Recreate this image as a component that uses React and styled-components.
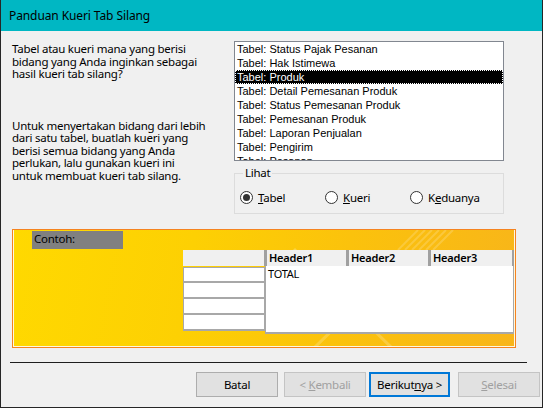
import React from "react";
import styled, {createGlobalStyle} from "styled-components";

const GlobalStyle = createGlobalStyle`
  body {
    margin: 0;
    background: #f0f0f0;
  }
`;

const UI_FONT = `"Noto Sans", "Open Sans", sans-serif`;
const LIST_FONT = `"Liberation Sans", Arial, sans-serif`;

const Window = styled.div`
  width: 543px;
  height: 408px;
  box-sizing: border-box;
  border: 1px solid #262626;
  border-top: none;
  background: #f0f0f0;
  font-family: ${UI_FONT};
  font-size: 11.5px;
  letter-spacing: -0.25px;
  color: #000;
  display: flex;
  flex-direction: column;
  overflow: hidden;
`;

const TitleBar = styled.div`
  height: 31px;
  flex: none;
  background: #00b7c3;
  display: flex;
  align-items: center;
  padding-left: 8px;
  font-size: 12px;
  letter-spacing: -0.1px;
`;

const Body = styled.div`
  padding: 10px 0 0 11px;
`;

const TopRow = styled.div`
  display: flex;
`;

const Intro = styled.div`
  width: 222px;
  padding-top: 2px;
`;

const Para = styled.p`
  margin: 0 0 ${p => p.$gap || 0}px;
  line-height: 12.5px;
`;

const RightCol = styled.div`
  width: 270px;
  display: flex;
  flex-direction: column;
`;

const ListBox = styled.div`
  height: 120px;
  box-sizing: border-box;
  border: 1px solid #828790;
  background: #fff;
  overflow: hidden;
  font-family: ${LIST_FONT};
  font-size: 11px;
  letter-spacing: 0;
`;

const ListItem = styled.div`
  height: 14px;
  line-height: 14px;
  padding-left: 2px;
  white-space: nowrap;
  background: ${p => (p.$selected ? "#000" : "transparent")};
  color: ${p => (p.$selected ? "#fff" : "#000")};
  outline: ${p => (p.$selected ? "1px dotted #fff" : "none")};
  outline-offset: -1px;
`;

const GroupBox = styled.fieldset`
  margin: 6px 0 0;
  height: 47px;
  box-sizing: border-box;
  border: 1px solid #dcdcdc;
  padding: 11px 0 0 5px;
  min-width: 0;
`;

const Legend = styled.legend`
  padding: 0 2px;
  margin-left: 3px;
  line-height: 12.5px;
`;

const RadioRow = styled.div`
  display: flex;
`;

const RadioOption = styled.label`
  width: 85px;
  display: flex;
  align-items: center;
  gap: 5px;
  line-height: 14px;
`;

const RadioCircle = styled.span`
  width: 13px;
  height: 13px;
  box-sizing: border-box;
  border-radius: 50%;
  border: 1px solid #333;
  background: #fff;
  display: flex;
  align-items: center;
  justify-content: center;
  &::after {
    content: "";
    width: 7px;
    height: 7px;
    border-radius: 50%;
    background: ${p => (p.$checked ? "#333" : "transparent")};
  }
`;

const SamplePanel = styled.div`
  position: relative;
  margin-top: 15px;
  width: 504px;
  height: 119px;
  box-sizing: border-box;
  border: 1px solid #f5831f;
  box-shadow: inset 1px -1px 0 #fff8e0, inset -1px 0 0 #fff8e0;
  background: linear-gradient(100deg, #ffd900 0%, #fdd003 35%, #fbc20c 65%, #f8b51a 100%);
  padding-top: 1px;
  overflow: hidden;
`;

const Decor = styled.svg`
  position: absolute;
  inset: 0;
  pointer-events: none;
`;

const SampleLabel = styled.div`
  position: relative;
  margin-left: 19px;
  width: 91px;
  height: 18px;
  background: #808080;
  padding-left: 2px;
  box-sizing: border-box;
  line-height: 15px;
`;

const Table = styled.div`
  position: relative;
  margin: 1px 0 0 170px;
  width: 331px;
`;

const HeaderRow = styled.div`
  display: flex;
  height: 16px;
`;

const HeaderCell = styled.div`
  width: ${p => p.$w}px;
  box-sizing: border-box;
  background: #f0f0f0;
  border-right: 2px solid #a0a0a0;
  border-left: ${p => (p.$first ? "none" : "1px solid #a0a0a0")};
  padding-left: 2px;
  font-weight: 600;
  font-size: 11px;
  letter-spacing: -0.2px;
  line-height: 16px;
`;

const BodyRow = styled.div`
  display: flex;
`;

const RowHeads = styled.div`
  width: 82px;
  display: flex;
  flex-direction: column;
  margin-top: 1px;
`;

const RowHead = styled.div`
  height: 16px;
  box-sizing: border-box;
  background: #fff;
  border: 1px solid #a8a8a8;
  border-top: ${p => (p.$first ? "1px solid #a8a8a8" : "none")};
  border-bottom-width: 2px;
`;

const DataArea = styled.div`
  width: 249px;
  height: 68px;
  box-sizing: border-box;
  background: #fff;
  border: 1px solid #a8a8a8;
  border-top: none;
  border-bottom-width: 2px;
  padding-left: 2px;
  font-size: 11px;
  line-height: 15px;
`;

const Footer = styled.div`
  margin-top: 14px;
`;

const Separator = styled.div`
  margin-left: 9px;
  width: 517px;
  height: 1px;
  background: #1e1e1e;
`;

const ButtonRow = styled.div`
  display: flex;
  padding: 9px 0 0 195px;
`;

const Button = styled.button`
  width: ${p => p.$w || 82}px;
  height: 25px;
  margin-left: ${p => p.$ml || 0}px;
  box-sizing: border-box;
  font-family: ${UI_FONT};
  font-size: 11.5px;
  letter-spacing: -0.25px;
  background: #e1e1e1;
  color: ${p => (p.disabled ? "#a0a0a0" : "#000")};
  border: ${p => (p.$default ? "2px solid #0078d7" : p.disabled ? "1px solid #c4c4c4" : "1px solid #adadad")};
  padding: 0;
  u {
    text-underline-offset: 1px;
  }
`;

const items = [
    "Tabel: Status Pajak Pesanan",
    "Tabel: Hak Istimewa",
    "Tabel: Produk",
    "Tabel: Detail Pemesanan Produk",
    "Tabel: Status Pemesanan Produk",
    "Tabel: Pemesanan Produk",
    "Tabel: Laporan Penjualan",
    "Tabel: Pengirim",
    "Tabel: Pesanan",
];

const App = () => {
    return (
        <Window>
            <GlobalStyle/>
            <TitleBar>Panduan Kueri Tab Silang</TitleBar>
            <Body>
                <TopRow>
                    <Intro>
                        <Para $gap={39}>
                            Tabel atau kueri mana yang berisi<br/>
                            bidang yang Anda inginkan sebagai<br/>
                            hasil kueri tab silang?
                        </Para>
                        <Para>
                            Untuk menyertakan bidang dari lebih<br/>
                            dari satu tabel, buatlah kueri yang<br/>
                            berisi semua bidang yang Anda<br/>
                            perlukan, lalu gunakan kueri ini<br/>
                            untuk membuat kueri tab silang.
                        </Para>
                    </Intro>
                    <RightCol>
                        <ListBox>
                            {items.map((item, i) => (
                                <ListItem key={item} $selected={i === 2}>{item}</ListItem>
                            ))}
                        </ListBox>
                        <GroupBox>
                            <Legend>Lihat</Legend>
                            <RadioRow>
                                <RadioOption><RadioCircle $checked/><span><u>T</u>abel</span></RadioOption>
                                <RadioOption><RadioCircle/><span><u>K</u>ueri</span></RadioOption>
                                <RadioOption><RadioCircle/><span>K<u>e</u>duanya</span></RadioOption>
                            </RadioRow>
                        </GroupBox>
                    </RightCol>
                </TopRow>
                <SamplePanel>
                    <Decor width="504" height="119" viewBox="0 0 504 119">
                        <path d="M240 62 L282 20 L324 62" fill="none" stroke="#fff" strokeOpacity="0.25" strokeWidth="3"/>
                        <path d="M300 119 L340 80 L380 119" fill="none" stroke="#fff" strokeOpacity="0.2" strokeWidth="3"/>
                        <g stroke="#fff" strokeOpacity="0.18" strokeWidth="2">
                            <line x1="385" y1="20" x2="405" y2="0"/>
                            <line x1="392" y1="20" x2="412" y2="0"/>
                            <line x1="399" y1="20" x2="419" y2="0"/>
                            <line x1="406" y1="20" x2="426" y2="0"/>
                            <line x1="413" y1="20" x2="433" y2="0"/>
                            <line x1="420" y1="20" x2="440" y2="0"/>
                        </g>
                    </Decor>
                    <SampleLabel>Contoh:</SampleLabel>
                    <Table>
                        <HeaderRow>
                            <HeaderCell $w={83} $first/>
                            <HeaderCell $w={82}>Header1</HeaderCell>
                            <HeaderCell $w={82}>Header2</HeaderCell>
                            <HeaderCell $w={84}>Header3</HeaderCell>
                        </HeaderRow>
                        <BodyRow>
                            <RowHeads>
                                <RowHead $first/>
                                <RowHead/>
                                <RowHead/>
                                <RowHead/>
                            </RowHeads>
                            <DataArea>TOTAL</DataArea>
                        </BodyRow>
                    </Table>
                </SamplePanel>
            </Body>
            <Footer>
                <Separator/>
                <ButtonRow>
                    <Button>Batal</Button>
                    <Button $ml={6} disabled>&lt; <u>K</u>embali</Button>
                    <Button $ml={3} $w={81} $default>Berikut<u>n</u>ya &gt;</Button>
                    <Button $ml={8} disabled><u>S</u>elesai</Button>
                </ButtonRow>
            </Footer>
        </Window>
    );
};

export default App;
